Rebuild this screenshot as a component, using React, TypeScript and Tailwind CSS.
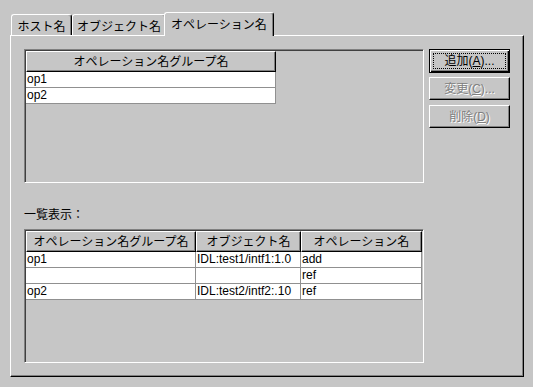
const FONT = "font-['Liberation_Sans','Noto_Sans_CJK_JP',sans-serif]";

function Tab({ label, width, active }: { label: string; width: string; active?: boolean }) {
  if (active) {
    return (
      <div
        className={`relative z-10 -mb-px -ml-[2px] h-[24px] ${width} flex items-start justify-center pt-[3px] bg-[#c6c6c6] border-l border-t border-white border-r border-r-black rounded-t-[3px] shadow-[inset_-1px_0_0_#808080]`}
      >
        {label}
      </div>
    );
  }
  return (
    <div
      className={`h-[21px] ${width} flex items-start justify-center pt-[3px] bg-[#c6c6c6] border-l border-t border-white border-r border-r-black rounded-t-[3px] shadow-[inset_-1px_0_0_#808080]`}
    >
      {label}
    </div>
  );
}

function HeaderCell({ label, width }: { label: string; width: string }) {
  return (
    <div
      className={`${width} h-[21px] shrink-0 flex items-center justify-center border-t border-l border-white border-r border-b border-r-black border-b-black shadow-[inset_-1px_-1px_0_#808080]`}
    >
      {label}
    </div>
  );
}

function Cell({ text, width }: { text: string; width: string }) {
  return (
    <div
      className={`${width} h-[16px] shrink-0 bg-white border-r border-b border-[#909090] pl-[1px] leading-[15px] whitespace-nowrap overflow-hidden`}
    >
      {text}
    </div>
  );
}

function Button({
  children,
  isDefault,
  disabled,
}: {
  children: React.ReactNode;
  isDefault?: boolean;
  disabled?: boolean;
}) {
  if (isDefault) {
    return (
      <div className="w-[81px] h-[24px] border border-black flex p-[3px] shadow-[inset_1px_1px_0_#fff,inset_-1px_-1px_0_#000,inset_-2px_-2px_0_#808080]">
        <div className="flex-1 flex items-center justify-center border border-dotted border-black leading-none">
          {children}
        </div>
      </div>
    );
  }
  return (
    <div
      className={`w-[81px] h-[23px] flex items-center justify-center border-t border-l border-white border-r border-b border-r-black border-b-black shadow-[inset_-1px_-1px_0_#808080] ${
        disabled ? 'text-[#808080] [text-shadow:1px_1px_0_#fff]' : ''
      }`}
    >
      {children}
    </div>
  );
}

export default function App() {
  return (
    <div className={`w-[533px] h-[387px] bg-[#c6c6c6] pt-[12px] pl-[10px] text-[12px] text-black ${FONT}`}>
      <div className="flex items-end h-[23px] pl-[1px]">
        <Tab label="ホスト名" width="w-[61px]" />
        <Tab label="オブジェクト名" width="w-[94px]" />
        <Tab label="オペレーション名" width="w-[110px]" active />
      </div>

      <div className="w-[514px] h-[342px] border-l border-t border-white border-r border-b border-r-black border-b-black shadow-[inset_-1px_-1px_0_#808080] pt-[13px] pl-[13px] flex">
        <div className="w-[400px] flex flex-col">
          <div className="h-[134px] p-px border border-t-[#808080] border-l-[#808080] border-r-white border-b-white shadow-[inset_1px_1px_0_#404040]">
            <div className="flex">
              <HeaderCell label="オペレーション名グループ名" width="w-[250px]" />
            </div>
            <div className="flex">
              <Cell text="op1" width="w-[250px]" />
            </div>
            <div className="flex">
              <Cell text="op2" width="w-[250px]" />
            </div>
          </div>

          <div className="mt-[25px] mb-[7px] h-[14px] leading-[14px]">一覧表示：</div>

          <div className="h-[134px] p-px border border-t-[#808080] border-l-[#808080] border-r-white border-b-white shadow-[inset_1px_1px_0_#404040]">
            <div className="flex">
              <HeaderCell label="オペレーション名グループ名" width="w-[170px]" />
              <HeaderCell label="オブジェクト名" width="w-[105px]" />
              <HeaderCell label="オペレーション名" width="w-[121px]" />
            </div>
            {[
              ['op1', 'IDL:test1/intf1:1.0', 'add'],
              ['', '', 'ref'],
              ['op2', 'IDL:test2/intf2:.10', 'ref'],
            ].map((r, i) => (
              <div key={i} className="flex">
                <Cell text={r[0]} width="w-[170px]" />
                <Cell text={r[1]} width="w-[105px]" />
                <Cell text={r[2]} width="w-[121px]" />
              </div>
            ))}
          </div>
        </div>

        <div className="ml-[5px] flex flex-col gap-[4px]">
          <Button isDefault>
            追加(<span className="underline">A</span>)...
          </Button>
          <Button disabled>
            変更(<span className="underline">C</span>)...
          </Button>
          <div className="mt-[1px]">
            <Button disabled>
              削除(<span className="underline">D</span>)
            </Button>
          </div>
        </div>
      </div>
    </div>
  );
}
